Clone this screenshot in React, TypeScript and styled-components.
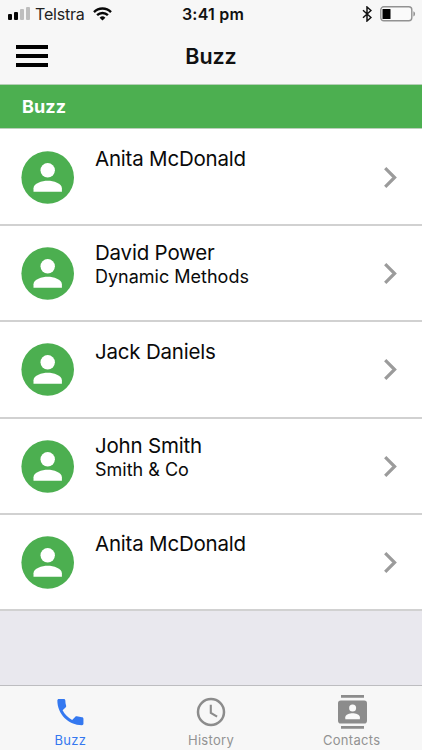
import React from 'react';
import styled, { createGlobalStyle } from 'styled-components';

const GlobalStyle = createGlobalStyle`
  * { box-sizing: border-box; }
  body { margin: 0; background: #e9e8ee; }
`;

const Screen = styled.div`
  width: 422px;
  height: 750px;
  display: flex;
  flex-direction: column;
  overflow: hidden;
  background: #e9e8ee;
  color: #111;
  font-family: Inter, 'Liberation Sans', sans-serif;
`;

const StatusBar = styled.header`
  height: 28px;
  flex: none;
  display: grid;
  grid-template-columns: 1fr auto 1fr;
  align-items: center;
  padding: 0 6px 0 8px;
  background: #f7f7f7;
`;

const StatusGroup = styled.div<{ $end?: boolean }>`
  display: flex;
  align-items: center;
  gap: ${(p) => (p.$end ? 8 : 0)}px;
  justify-content: ${(p) => (p.$end ? 'flex-end' : 'flex-start')};
  svg { display: block; flex: none; }
`;

const Carrier = styled.span`
  font-size: 16px;
  line-height: 28px;
  letter-spacing: -0.2px;
  margin: 0 8px 0 5px;
  color: #222;
`;

const Clock = styled.span`
  padding-left: 2px;
  font-size: 16px;
  line-height: 28px;
  font-weight: 600;
  letter-spacing: 0.2px;
`;

const NavBar = styled.nav`
  height: 56px;
  flex: none;
  display: grid;
  grid-template-columns: 1fr auto 1fr;
  align-items: center;
  padding: 0 16px;
  background: #f7f7f7;
`;

const MenuButton = styled.button`
  width: 32px;
  height: 22px;
  padding: 0;
  border: 0;
  background: none;
  svg { display: block; }
`;

const Title = styled.h1`
  margin: 0;
  font-size: 21.5px;
  line-height: 56px;
  font-weight: 600;
  letter-spacing: -0.1px;
`;

const SectionHeader = styled.h2`
  height: 45px;
  flex: none;
  margin: 0;
  padding: 1px 22px 0;
  border-top: 1px solid #b5cfb6;
  border-bottom: 1px solid #bccfbc;
  background: #4caf50;
  color: #fff;
  font-size: 18px;
  line-height: 42px;
  font-weight: 700;
  letter-spacing: 0.1px;
`;

const List = styled.ul`
  margin: 0;
  padding: 0.7px 0 0;
  list-style: none;
  background: #fff;
`;

const Row = styled.li`
  height: 96.3px;
  display: flex;
  padding: 0 24px 0 21px;
  border-bottom: 2px solid #d1d1d1;
  background: #fff;
  > svg { display: block; flex: none; margin-top: 21px; }
`;

const Names = styled.div<{ $single: boolean }>`
  flex: 1;
  margin-left: 21px;
  padding-top: ${(p) => (p.$single ? 16.3 : 14.3)}px;
  color: #0a0a0a;
`;

const Name = styled.div`
  font-size: 20.5px;
  line-height: 25px;
  letter-spacing: -0.2px;
`;

const Company = styled.div`
  font-size: 18px;
  line-height: 23px;
  letter-spacing: 0;
`;

const Tabs = styled.footer`
  height: 65px;
  margin-top: auto;
  flex: none;
  display: grid;
  grid-template-columns: repeat(3, 1fr);
  border-top: 1px solid #bdbdc0;
  background: #f7f7f7;
`;

const Tab = styled.button<{ $active?: boolean }>`
  display: flex;
  flex-direction: column;
  align-items: center;
  padding: 8px 0 0;
  border: 0;
  background: none;
  font-family: inherit;
  font-size: 13px;
  line-height: 18px;
  letter-spacing: 0.3px;
  color: ${(p) => (p.$active ? '#3478f0' : '#929292')};
  svg { display: block; margin-bottom: 1px; }
`;

const Signal = () => (
  <svg width="22" height="14" viewBox="0 0 22 14">
    <rect x="0" y="7" width="4" height="6" rx="1" fill="#080808" />
    <rect x="6" y="5" width="4" height="8" rx="1" fill="#080808" />
    <rect x="12" y="2" width="4" height="11" rx="1" fill="#bebebe" />
    <rect x="18" y="0" width="4" height="13" rx="1" fill="#bebebe" />
  </svg>
);

const Wifi = () => (
  <svg width="19" height="14" viewBox="0 0 19 14" fill="none" stroke="#080808" strokeWidth="2.4">
    <path d="M1 5.1a12 12 0 0 1 17 0" />
    <path d="M4.1 8.2a7.7 7.7 0 0 1 10.8 0" />
    <path d="M9.5 13.6 6.6 10.7a4.1 4.1 0 0 1 5.8 0Z" fill="#080808" stroke="none" />
  </svg>
);

const Bluetooth = () => (
  <svg width="10" height="16" viewBox="0 0 10 16" fill="none" stroke="#111" strokeWidth="1.5">
    <path d="m1 4.3 8 7.2L5 15V1l4 3.5-8 7.2" />
  </svg>
);

const Battery = () => (
  <svg width="36" height="16" viewBox="0 0 36 16">
    <rect x=".8" y=".8" width="31" height="14" rx="3" fill="#fafafa" stroke="#929292" strokeWidth="1.4" />
    <rect x="2.5" y="3" width="8" height="10" rx=".6" fill="#000" />
    <path d="M33.4 5.2c2.2.7 2.2 4.5 0 5.2Z" fill="#929292" />
  </svg>
);

const Avatar = () => (
  <svg width="53" height="53" viewBox="0 0 53 53">
    <circle cx="26.7" cy="26.5" r="26.3" fill="#4caf50" />
    <circle cx="26.7" cy="19.3" r="7.2" fill="#fff" />
    <path d="M12.5 40.7v-3.4c0-5 8.4-7.6 14.2-7.6s14.2 2.6 14.2 7.6v3.4Z" fill="#fff" />
  </svg>
);

const Chevron = () => (
  <svg width="14" height="53" viewBox="0 0 14 53" fill="none" stroke="#9b9b9b" strokeWidth="3.2">
    <path d="m1.2 17.1 9.4 9.4-9.4 9.4" />
  </svg>
);

const PhoneIcon = () => (
  <svg width="34" height="36" viewBox="0 0 34 36">
    <path transform="translate(0 .7) scale(1.45)" fill="#3478f0" d="M6.62 10.79c1.44 2.83 3.76 5.14 6.59 6.59l2.2-2.2c.27-.27.67-.36 1.02-.24 1.12.37 2.33.57 3.57.57.55 0 1 .45 1 1V20c0 .55-.45 1-1 1-9.39 0-17-7.61-17-17 0-.55.45-1 1-1h3.5c.55 0 1 .45 1 1 0 1.25.2 2.45.57 3.57.11.35.03.74-.25 1.02l-2.2 2.2z" />
  </svg>
);

const ClockIcon = () => (
  <svg width="34" height="36" viewBox="0 0 34 36" fill="none" stroke="#8c8c8c">
    <circle cx="17" cy="18" r="13" strokeWidth="2.5" />
    <path d="M16.8 10.7v8.2l6.3 3.8" strokeWidth="2.1" />
  </svg>
);

const ContactsIcon = () => (
  <svg width="34" height="36" viewBox="0 0 34 36" fill="#8c8c8c">
    <path d="M6 1h23v2.8H6zM6 32h23v2.8H6z" />
    <rect x="3" y="6.5" width="29" height="23" rx="2.8" />
    <circle cx="17.6" cy="14" r="3.5" fill="#fafafa" />
    <path d="M10.3 25.3v-2c0-2.6 4.4-4 7.3-4s7.3 1.4 7.3 4v2Z" fill="#fafafa" />
  </svg>
);

const contacts: { name: string; company?: string }[] = [
  { name: 'Anita McDonald' },
  { name: 'David Power', company: 'Dynamic Methods' },
  { name: 'Jack Daniels' },
  { name: 'John Smith', company: 'Smith & Co' },
  { name: 'Anita McDonald' },
];

export default function App() {
  return (
    <Screen>
      <GlobalStyle />
      <StatusBar>
        <StatusGroup><Signal /><Carrier>Telstra</Carrier><Wifi /></StatusGroup>
        <Clock>3:41 pm</Clock>
        <StatusGroup $end><Bluetooth /><Battery /></StatusGroup>
      </StatusBar>
      <NavBar>
        <MenuButton aria-label="Menu">
          <svg width="32" height="22" viewBox="0 0 32 22"><path d="M0 0h32v4H0zM0 9h32v4H0zM0 18h32v4H0z" /></svg>
        </MenuButton>
        <Title>Buzz</Title>
      </NavBar>
      <SectionHeader>Buzz</SectionHeader>
      <List>
        {contacts.map((c, i) => (
          <Row key={i}>
            <Avatar />
            <Names $single={!c.company}>
              <Name>{c.name}</Name>
              {c.company && <Company>{c.company}</Company>}
            </Names>
            <Chevron />
          </Row>
        ))}
      </List>
      <Tabs>
        <Tab $active><PhoneIcon />Buzz</Tab>
        <Tab><ClockIcon />History</Tab>
        <Tab><ContactsIcon />Contacts</Tab>
      </Tabs>
    </Screen>
  );
}
